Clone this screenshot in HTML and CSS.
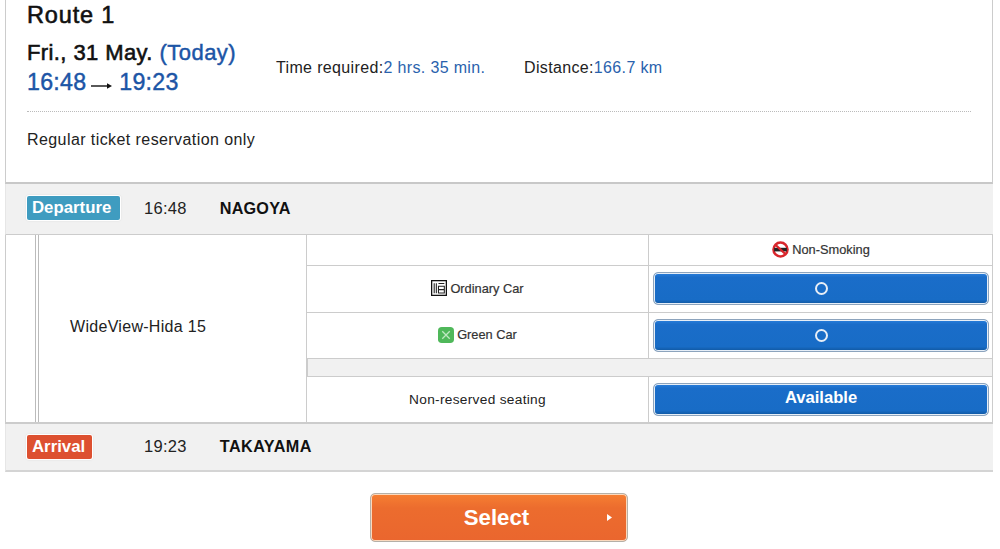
FILE: index.html
```html
<!DOCTYPE html>
<html lang="en">
<head>
<meta charset="utf-8">
<title>Route 1</title>
<link rel="stylesheet" href="styles.css">
</head>
<body>
<main class="page">
  <section class="summary">
    <h1 class="route-title">Route 1</h1>
    <div class="route-info">
      <div class="when">
        <p class="date">Fri., 31 May. <span class="blue">(Today)</span></p>
        <p class="times"><span>16:48</span>
          <svg class="arrow" width="22" height="8" viewBox="0 0 22 8"><path d="M0 4H17" stroke="#111" stroke-width="1.4"/><path d="M16 1.2L21 4L16 6.8Z" fill="#111"/></svg>
          <span>19:23</span></p>
      </div>
      <p class="meta meta-time">Time required:<span class="blue-light">2 hrs. 35 min.</span></p>
      <p class="meta meta-dist">Distance:<span class="blue-light">166.7 km</span></p>
    </div>
    <p class="note">Regular ticket reservation only</p>
  </section>

  <div class="stop stop-dep">
    <span class="badge badge-dep">Departure</span>
    <span class="stop-time">16:48</span>
    <strong class="stop-name">NAGOYA</strong>
  </div>

  <div class="train">
    <div class="rail"></div>
    <div class="train-name">WideView-Hida 15</div>
    <div class="seats">
      <div class="cell row-head"></div>
      <div class="cell cell-r row-head small">
        <svg class="ico" width="17" height="17" viewBox="0 0 16 16"><circle cx="8" cy="8" r="6.6" fill="#fff" stroke="#d8262c" stroke-width="2.4"/><rect x="2" y="6.4" width="12" height="3.4" fill="#222"/><path d="M3 3.4L13 12.6" stroke="#d8262c" stroke-width="2"/></svg>
        Non-Smoking
      </div>

      <div class="cell row-seat small">
        <svg class="ico" width="16" height="16" viewBox="0 0 15 15"><rect x=".6" y=".6" width="13.8" height="13.8" fill="#fff" stroke="#111" stroke-width="1.2"/><path d="M3 3V12.5M5 3V12.5M7 3.2H12.5M7 5.8H12.5V12.2H7ZM7 9H12.5" fill="none" stroke="#222" stroke-width="1"/></svg>
        Ordinary Car
      </div>
      <div class="cell cell-r row-seat"><button class="seat-btn"><span class="ring"></span></button></div>

      <div class="cell row-seat2 small">
        <svg class="ico" width="16" height="16" viewBox="0 0 15 15"><rect width="15" height="15" rx="3.5" fill="#4fb85a"/><path d="M4 4L11 11M11 4L4 11" stroke="#bfe8c2" stroke-width="1.2"/></svg>
        Green Car
      </div>
      <div class="cell cell-r row-seat2"><button class="seat-btn"><span class="ring"></span></button></div>

      <div class="gap"></div>

      <div class="cell row-free plain">Non-reserved seating</div>
      <div class="cell cell-r row-free"><button class="seat-btn seat-btn-text">Available</button></div>
    </div>
  </div>

  <div class="stop stop-arr">
    <span class="badge badge-arr">Arrival</span>
    <span class="stop-time">19:23</span>
    <strong class="stop-name">TAKAYAMA</strong>
  </div>

  <div class="actions">
    <button class="select-btn">Select<svg class="caret" width="5" height="7" viewBox="0 0 5 7"><path d="M0 0L5 3.5L0 7Z" fill="#fff"/></svg></button>
  </div>
</main>
</body>
</html>
```
FILE: styles.css
```css
* { box-sizing: border-box; }
html, body { margin: 0; padding: 0; background: #fff; }
body { font-family: "Liberation Sans", Arial, sans-serif; color: #1a1a1a; height: 549px; overflow: hidden; }
p, h1 { margin: 0; }
.page { width: 993px; padding-left: 5px; }

.summary { height: 184px; border-left: 1px solid #ccc; border-right: 1px solid #ccc; border-bottom: 2px solid #c8c8c8; padding: 0 21px; }
.route-title { font-size: 23.5px; line-height: 26px; padding-top: 2px; font-weight: normal; -webkit-text-stroke: .6px #111; letter-spacing: .85px; color: #111; height: 29px; }
.route-info { display: flex; align-items: flex-start; margin-top: 9px; height: 74px; border-bottom: 1px dotted #bbb; }
.date { font-size: 22px; line-height: 30px; letter-spacing: .35px; color: #111; -webkit-text-stroke: .6px #111; white-space: nowrap; word-spacing: .3px; }
.date .blue { color: #1c55a6; -webkit-text-stroke: .45px #1c55a6; letter-spacing: .45px; }
.blue { color: #1c55a6; }
.times { font-size: 23.2px; line-height: 29px; color: #1c55a6; -webkit-text-stroke: .45px #1c55a6; display: flex; align-items: center; letter-spacing: .25px; }
.arrow { margin: 6px 6px 0 5px; }
.when { width: 249px; }
.meta { font-size: 16px; line-height: 18px; margin-top: 21px; letter-spacing: .35px; color: #222; white-space: nowrap; }
.blue-light { color: #2a62ad; }
.meta-time { width: 248px; }
.note { font-size: 16px; line-height: 20px; margin-top: 18px; letter-spacing: .42px; color: #222; }

.stop { display: flex; align-items: center; background: #f1f1f1; border-left: 1px solid #e6e6e6; padding-left: 21px; }
.stop-dep { height: 51px; border-bottom: 1px solid #ccc; padding-bottom: 2px; }
.stop-arr { height: 48px; border-bottom: 2px solid #d4d4d4; padding-top: 1px; padding-bottom: 2px; }
.badge { display: inline-block; height: 24px; line-height: 22px; padding: 0 4px; font-size: 16.8px; font-weight: bold; color: #fff; border-radius: 2px; box-shadow: 0 0 0 1px #fff, 0 0 2px 1px #ddd; border: 1px solid transparent; white-space: nowrap; }
.badge-dep { background: #3f9cc0; width: 93px; }
.badge-arr { background: #dd5030; width: 65px; }
.stop-time { font-size: 16.5px; letter-spacing: .3px; color: #222; }
.stop-name { font-size: 16.2px; letter-spacing: .2px; color: #111; margin-left: 33px; }
.stop-arr .stop-name { letter-spacing: .45px; }
.badge-dep + .stop-time { margin-left: 24px; }
.badge-arr + .stop-time { margin-left: 52px; }

.train { display: flex; height: 189px; border-left: 1px solid #ccc; border-right: 1px solid #ccc; border-bottom: 2px solid #ccc; }
.rail { width: 33px; flex: none; border-right: 4px double #bbb; }
.train-name { width: 268px; flex: none; padding: 0 0 4px 31px; display: flex; align-items: center; font-size: 16px; letter-spacing: .3px; color: #222; border-right: 1px solid #ccc; }
.seats { flex: 1; display: grid; grid-template-columns: 341px 1fr; grid-template-rows: 31px 47px 46px 18px 1fr; }
.cell { display: flex; align-items: center; justify-content: center; border-bottom: 1px solid #ccc; }
.cell-r { border-left: 1px solid #ccc; padding: 0 3px 1px 4px; }
.row-free { border-bottom: 0; }
.small { font-size: 12.8px; color: #333; -webkit-text-stroke: .2px #333; gap: 3px; padding-bottom: 2px; }
.plain { font-size: 13.7px; letter-spacing: .3px; color: #222; }
.gap { grid-column: 1 / -1; background: #f1f1f1; border-bottom: 1px solid #ccc; border-left: 1px solid #ccc; }
.ico { flex: none; }
.seat-btn { width: 100%; height: 33px; border: 1px solid #8da4bd; border-radius: 5px; padding: 0; background: linear-gradient(#2a7fdc 0, #1a6dc9 14%, #186cc6 86%, #0f569e 100%); box-shadow: inset 0 0 0 1px #e6eef7; color: #fff; font: bold 16.6px "Liberation Sans", Arial, sans-serif; display: flex; align-items: center; justify-content: center; }
.seat-btn-text { padding-bottom: 3px; }
.ring { width: 13px; height: 13px; border: 2px solid #e8eef6; border-radius: 50%; }

.actions { display: flex; justify-content: center; padding-top: 21px; }
.select-btn { width: 258px; height: 49px; position: relative; border: 1px solid #b5b0a8; border-radius: 5px; background: linear-gradient(#f67f32 0, #ec6c2e 30%, #ea662e 100%); box-shadow: inset 0 0 0 1px #fbd9bd; color: #fff; font: bold 22.2px "Liberation Sans", Arial, sans-serif; padding: 1px 5px 0 0; }
.caret { position: absolute; right: 15px; top: 20px; }
```
